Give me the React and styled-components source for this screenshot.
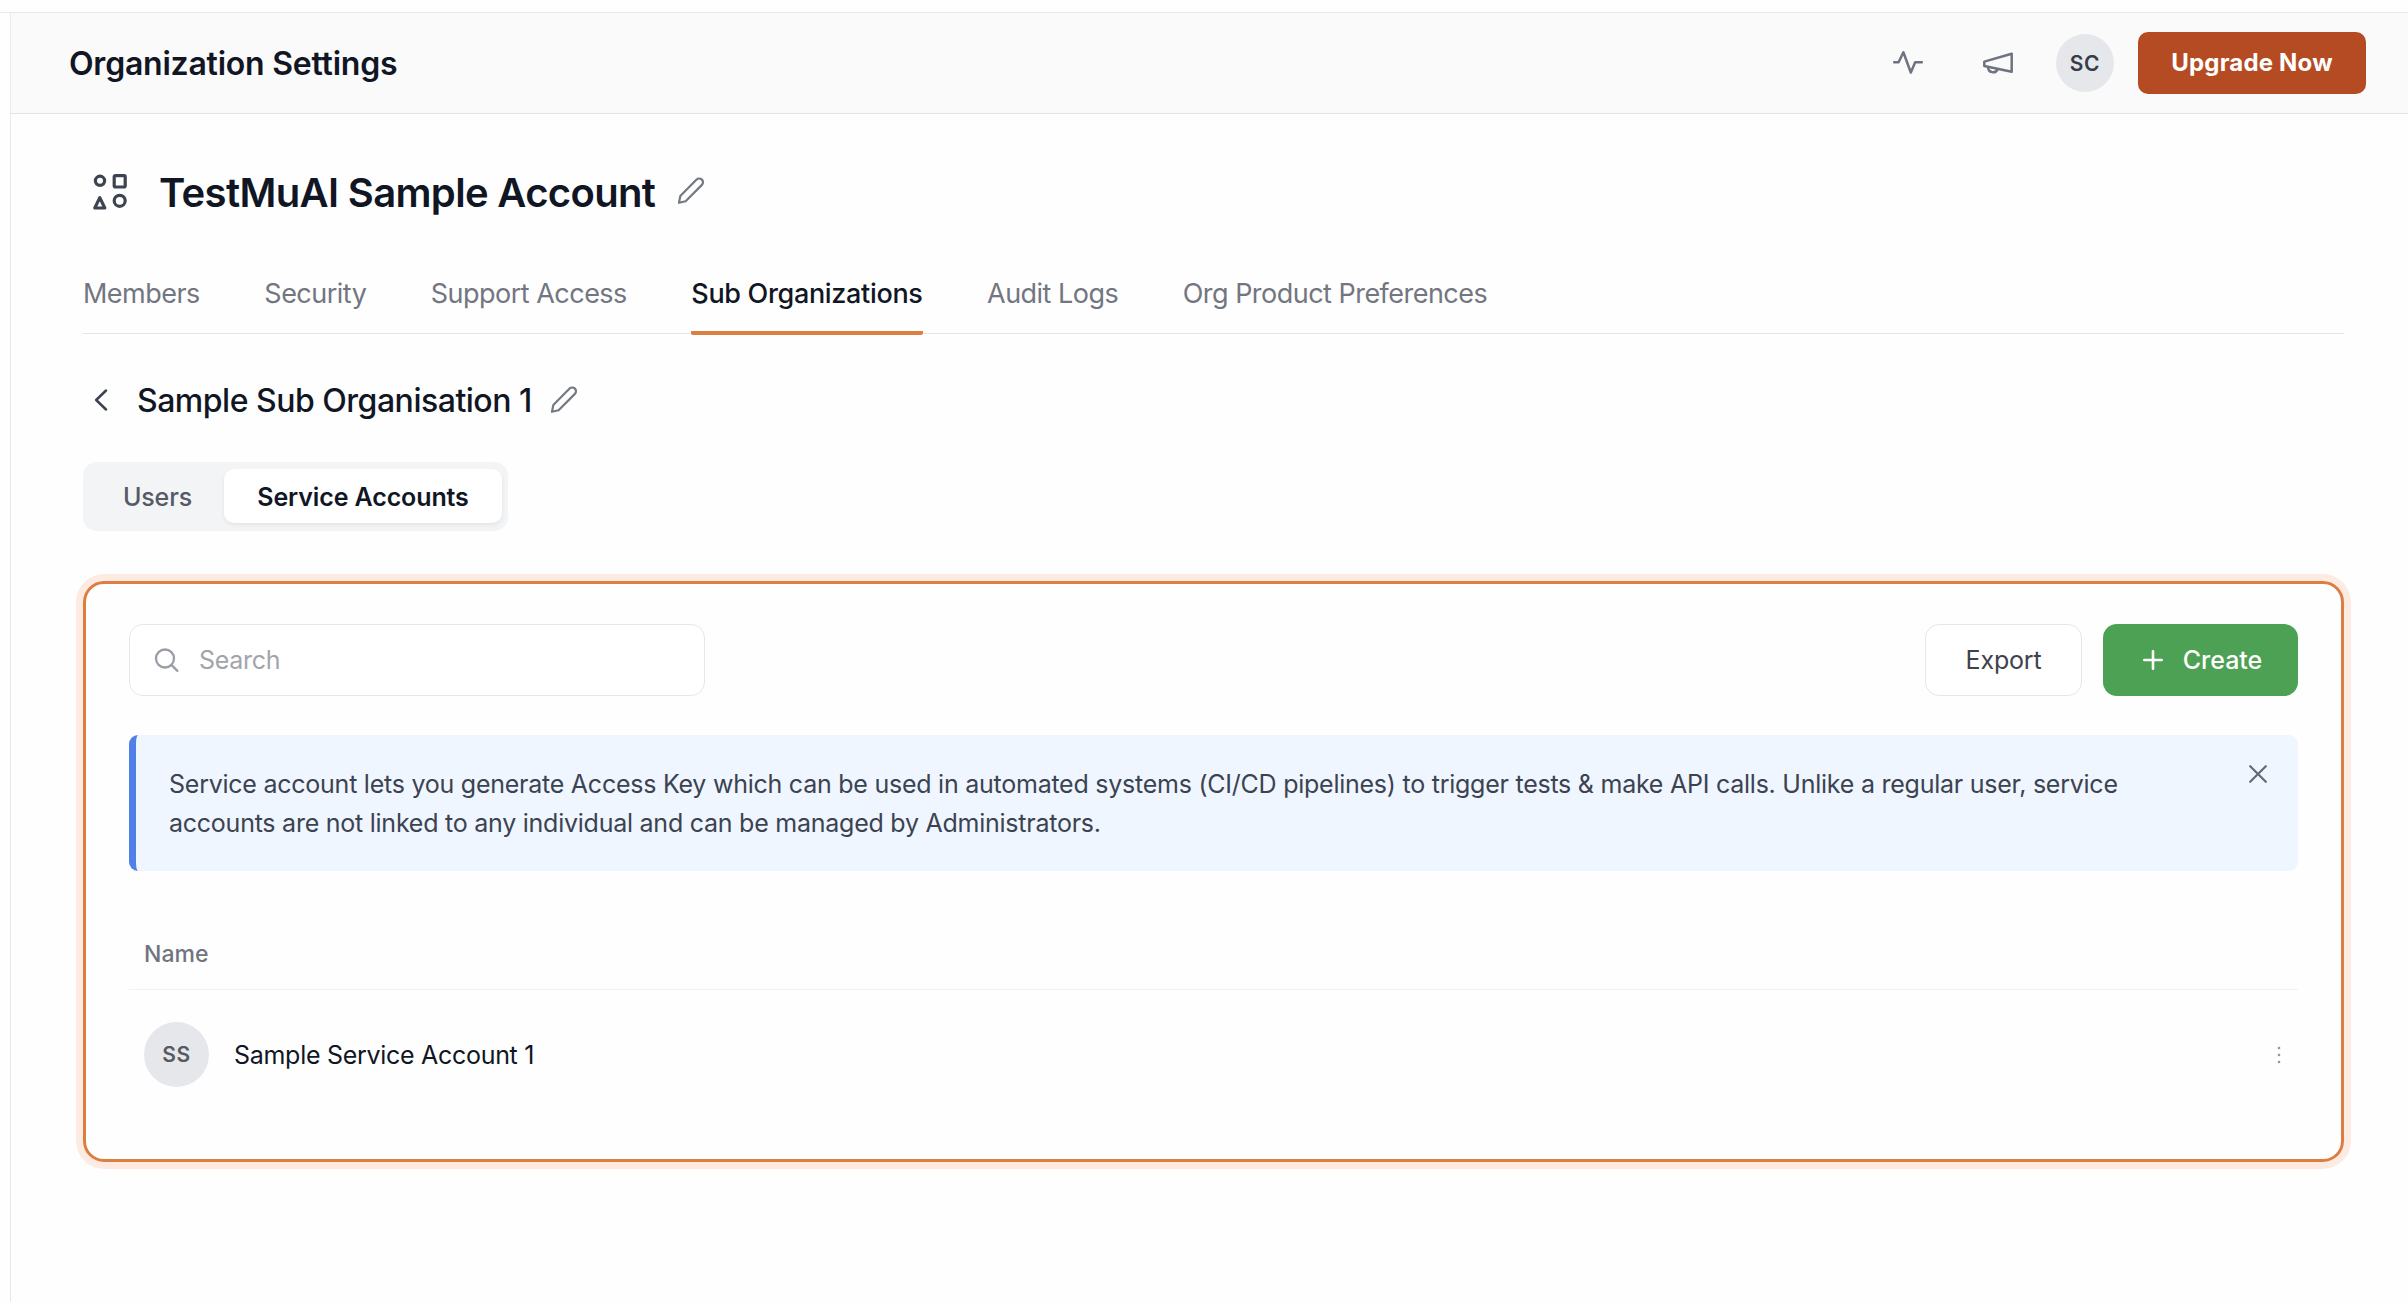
import React from "react";
import styled, { createGlobalStyle } from "styled-components";

const GlobalStyle = createGlobalStyle`
  * {
    box-sizing: border-box;
  }

  body {
    margin: 0;
    background: #fefefe;
    font-family: Inter, "Liberation Sans", sans-serif;
    color: #111624;
  }

  h1, h2, h3, p {
    margin: 0;
  }

  button, input {
    font-family: inherit;
  }

  svg {
    display: block;
    flex: none;
  }
`;

const tabs = [
  { label: "Members" },
  { label: "Security" },
  { label: "Support Access" },
  { label: "Sub Organizations", active: true },
  { label: "Audit Logs" },
  { label: "Org Product Preferences" },
];

const PulseIcon = () => (
  <svg width="30" height="25" viewBox="0 0 30 25" fill="none" stroke="#6f7380" strokeWidth="2.5" strokeLinecap="round" strokeLinejoin="round">
    <path d="M1.2 11.3h4.4l4.8-10L17.8 21.5l4.4-10.2h6.6" />
  </svg>
);

const MegaphoneIcon = () => (
  <svg width="30" height="24" viewBox="0 0 30 24" fill="none" stroke="#6f7380" strokeWidth="2.5" strokeLinejoin="round">
    <path d="M1.3 10.6L28.7 2.7v18.1L1.3 15z" />
    <path d="M5.2 16a4.9 4.9 0 0 0 9.5 2" />
  </svg>
);

const ShapesIcon = () => (
  <svg width="36" height="38" viewBox="0 0 36 38" fill="none" stroke="#3d4350" strokeWidth="3.2" strokeLinejoin="round">
    <circle cx="8" cy="7.8" r="4.6" />
    <rect x="22.2" y="2.6" width="11" height="11.4" rx="1.2" />
    <path d="M7.8 24.6l5 10.4h-10z" />
    <circle cx="27.7" cy="27.8" r="5.5" />
  </svg>
);

const PencilIcon = () => (
  <svg width="28" height="29" viewBox="0 0 28 29" fill="none" stroke="#757984" strokeWidth="2.2" strokeLinejoin="round">
    <path d="M2 25.8l1.3-6.7L19.6 2.6a3.7 3.7 0 0 1 5.3 5.3L8.6 24.3z" />
  </svg>
);

const App = () => {
  return (
    <>
      <GlobalStyle />
      <Page>
        <Shell>
          <Header>
            <PageTitle>Organization Settings</PageTitle>
            <HeaderActions>
              <PulseIcon />
              <MegaphoneIcon />
              <Avatar $size={58}>SC</Avatar>
              <UpgradeButton>Upgrade Now</UpgradeButton>
            </HeaderActions>
          </Header>
          <Content>
            <AccountRow>
              <ShapesIcon />
              <AccountName>TestMuAI Sample Account</AccountName>
              <PencilIcon />
            </AccountRow>
            <Tabs>
              {tabs.map((tab) => (
                <Tab key={tab.label} $active={tab.active}>
                  {tab.label}
                </Tab>
              ))}
            </Tabs>
            <SubOrgRow>
              <svg width="14" height="22" viewBox="0 0 14 22" fill="none" stroke="#3d4350" strokeWidth="2.5" strokeLinecap="round" strokeLinejoin="round">
                <path d="M12 1.5L2.2 11 12 20.5" />
              </svg>
              <SubOrgName>Sample Sub Organisation 1</SubOrgName>
              <PencilIcon />
            </SubOrgRow>
            <Segmented>
              <Segment>Users</Segment>
              <Segment $active>Service Accounts</Segment>
            </Segmented>
            <Card>
              <Toolbar>
                <SearchBox>
                  <svg width="26" height="26" viewBox="0 0 26 26" fill="none" stroke="#9a9da6" strokeWidth="2.3" strokeLinecap="round">
                    <circle cx="11" cy="11.5" r="9" />
                    <path d="M17.6 18.2l5.8 5.6" />
                  </svg>
                  <input placeholder="Search" />
                </SearchBox>
                <Buttons>
                  <ExportButton>Export</ExportButton>
                  <CreateButton>
                    <svg width="20" height="20" viewBox="0 0 20 20" fill="none" stroke="#fff" strokeWidth="2.6" strokeLinecap="round">
                      <path d="M10 1.3v17.4M1.3 10h17.4" />
                    </svg>
                    Create
                  </CreateButton>
                </Buttons>
              </Toolbar>
              <Notice>
                <p>
                  Service account lets you generate Access Key which can be used
                  in automated systems (CI/CD pipelines) to trigger tests & make
                  API calls. Unlike a regular user, service
                  <br />
                  accounts are not linked to any individual and can be managed
                  by Administrators.
                </p>
                <svg width="20" height="18" viewBox="0 1 20 18" fill="none" stroke="#646976" strokeWidth="2.2" strokeLinecap="round">
                  <path d="M2.2 2.2l15.6 15.6M17.8 2.2L2.2 17.8" />
                </svg>
              </Notice>
              <TableHead>Name</TableHead>
              <TableRow>
                <Avatar $size={65} $muted>SS</Avatar>
                <span>Sample Service Account 1</span>
                <svg width="4" height="18" viewBox="0 0 4 18" fill="#93969c">
                  <circle cx="2" cy="2" r="1.3" />
                  <circle cx="2" cy="9" r="1.3" />
                  <circle cx="2" cy="16" r="1.3" />
                </svg>
              </TableRow>
            </Card>
          </Content>
        </Shell>
      </Page>
    </>
  );
};

export default App;

const Page = styled.div`
  height: 1302px;
  padding-top: 12px;
  overflow: hidden;
`;

const Shell = styled.div`
  height: 100%;
  border-top: 1px solid #e9e9ea;
  padding-left: 10px;
`;

const Header = styled.header`
  display: flex;
  align-items: center;
  justify-content: space-between;
  height: 101px;
  padding: 0 42px 0 58px;
  background: #fafafa;
  border-left: 1px solid #e9e9ea;
  border-bottom: 1px solid #e4e4e6;
`;

const PageTitle = styled.h2`
  font-size: 32px;
  font-weight: 600;
  letter-spacing: -0.23px;
`;

const HeaderActions = styled.div`
  display: flex;
  align-items: center;

  > svg:first-child {
    margin-right: 60px;
  }

  > svg + svg {
    margin-right: 43px;
  }
`;

const Avatar = styled.div`
  display: flex;
  align-items: center;
  justify-content: center;
  width: ${(props) => props.$size}px;
  height: ${(props) => props.$size}px;
  border-radius: 50%;
  background: #e6e7ea;
  color: ${(props) => (props.$muted ? "#555962" : "#363c4a")};
  font-size: 21px;
  font-weight: 600;
  letter-spacing: 0.6px;
`;

const UpgradeButton = styled.button`
  width: 228px;
  height: 62px;
  margin-left: 24px;
  padding: 0 0 1px;
  border: none;
  border-radius: 10px;
  background: #b54b23;
  color: #fff;
  font-size: 24px;
  font-weight: 700;
  letter-spacing: 0.2px;
`;

const Content = styled.main`
  height: 1188px;
  padding: 49px 64px 0 72px;
  border-left: 1px solid #e9e9ea;
`;

const AccountRow = styled.div`
  display: flex;
  align-items: center;
  height: 58px;
  padding-left: 9px;

  > svg:last-child {
    margin-left: 22px;
    margin-bottom: 1px;
  }
`;

const AccountName = styled.h1`
  margin-left: 31px;
  font-size: 40px;
  font-weight: 600;
  letter-spacing: -0.66px;
`;

const Tabs = styled.nav`
  display: flex;
  gap: 64.5px;
  height: 113px;
  border-bottom: 1px solid #e5e5e8;
`;

const Tab = styled.div`
  height: 114px;
  padding-top: 54px;
  flex: none;
  border-bottom: 4px solid ${(props) => (props.$active ? "#dc7d42" : "transparent")};
  border-radius: 2px;
  color: ${(props) => (props.$active ? "#111624" : "#737680")};
  font-size: 27px;
  font-weight: ${(props) => (props.$active ? 500 : 400)};
  letter-spacing: ${(props) => (props.$active ? -0.33 : -0.52)}px;
  line-height: 37px;
`;

const SubOrgRow = styled.div`
  display: flex;
  align-items: center;
  margin-top: 41px;
  height: 50px;
  padding-left: 11px;

  > svg:last-child {
    margin-left: 18px;
  }
`;

const SubOrgName = styled.h3`
  margin-left: 29px;
  font-size: 32px;
  font-weight: 500;
  letter-spacing: -0.49px;
`;

const Segmented = styled.div`
  display: flex;
  width: 425px;
  height: 69px;
  margin-top: 37px;
  padding: 7px 6px 8px;
  border-radius: 14px;
  background: #f3f4f5;
`;

const Segment = styled.div`
  display: flex;
  align-items: center;
  justify-content: center;
  width: ${(props) => (props.$active ? 278 : 135)}px;
  padding: 1px 0 0 ${(props) => (props.$active ? 0 : 2)}px;
  border-radius: 10px;
  background: ${(props) => (props.$active ? "#fff" : "transparent")};
  box-shadow: ${(props) => (props.$active ? "0 2px 4px rgba(0, 0, 0, 0.07)" : "none")};
  color: ${(props) => (props.$active ? "#111624" : "#555a66")};
  font-size: 25px;
  font-weight: ${(props) => (props.$active ? 600 : 500)};
  letter-spacing: -0.12px;
`;

const Card = styled.section`
  height: 581px;
  margin-top: 50px;
  padding: 40px 43px;
  border: 3px solid #dc7d42;
  border-radius: 21px;
  box-shadow: 0 0 0 7px #fdebe2;
`;

const Toolbar = styled.div`
  display: flex;
  justify-content: space-between;
  height: 72px;
`;

const SearchBox = styled.label`
  display: flex;
  align-items: center;
  width: 576px;
  padding-left: 24px;
  border: 1px solid #e6e7e9;
  border-radius: 14px;
  background: #fff;

  > input {
    width: 400px;
    margin-left: 19px;
    padding: 0;
    border: none;
    outline: none;
    background: transparent;
    font-size: 25px;
    letter-spacing: -0.3px;
  }

  > input::placeholder {
    color: #a2a4ab;
  }
`;

const Buttons = styled.div`
  display: flex;
  gap: 21px;
`;

const Button = styled.button`
  display: flex;
  align-items: center;
  justify-content: center;
  height: 72px;
  padding: 0;
  border-radius: 14px;
  font-size: 25px;
`;

const ExportButton = styled(Button)`
  width: 157px;
  border: 1px solid #e6e7e9;
  background: #fff;
  color: #3e424d;
  letter-spacing: -0.2px;
`;

const CreateButton = styled(Button)`
  width: 195px;
  padding-left: 4px;
  gap: 20px;
  border: none;
  background: #4da154;
  color: #fff;
  font-weight: 500;
`;

const Notice = styled.div`
  display: flex;
  justify-content: space-between;
  height: 136px;
  margin-top: 39px;
  padding: 30px 30px 0 33px;
  border-left: 7px solid #4f80e8;
  border-radius: 9px;
  background: #eff6ff;
  color: #3c4350;
  font-size: 25px;
  line-height: 39px;
  letter-spacing: -0.245px;

  > p {
    white-space: nowrap;
  }
`;

const TableHead = styled.div`
  height: 119px;
  padding: 65px 15px 0;
  border-bottom: 1px solid #f1f1f3;
  color: #71747e;
  font-size: 23px;
  font-weight: 500;
  line-height: 36px;
`;

const TableRow = styled.div`
  display: flex;
  align-items: center;
  height: 129px;
  padding: 0 17px 0 15px;
  font-size: 25px;
  letter-spacing: -0.29px;

  > span {
    margin-left: 25px;
  }

  > svg {
    margin-left: auto;
  }
`;
